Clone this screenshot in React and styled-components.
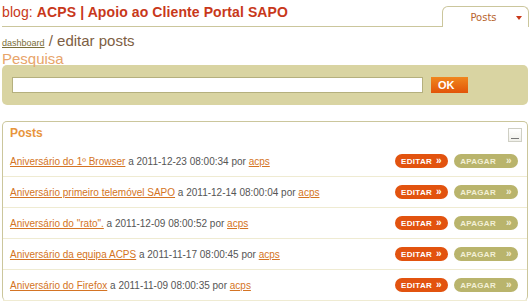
import React from 'react';
import styled, { createGlobalStyle } from 'styled-components';

const GlobalStyle = createGlobalStyle`
  body {
    margin: 0;
    background: #fff;
    font-family: "Liberation Sans", Arial, sans-serif;
  }
`;

const posts = [
  { title: 'Aniversário do 1º Browser', date: '2011-12-23 08:00:34' },
  { title: 'Aniversário primeiro telemóvel SAPO', date: '2011-12-14 08:00:04' },
  { title: 'Aniversário do "rato".', date: '2011-12-09 08:00:52' },
  { title: 'Aniversário da equipa ACPS', date: '2011-11-17 08:00:45' },
  { title: 'Aniversário do Firefox', date: '2011-11-09 08:00:35' },
];

const App = () => {
  return (
    <>
      <GlobalStyle />
      <Page>
        <Header>
          <Title>blog: <b>ACPS | Apoio ao Cliente Portal SAPO</b></Title>
          <Tab>
            <span>Posts</span>
            <TabArrow />
          </Tab>
        </Header>

        <Crumbs>
          <CrumbLink href="#">dashboard</CrumbLink> / editar posts
        </Crumbs>
        <SearchLabel>Pesquisa</SearchLabel>
        <SearchBox>
          <SearchInput type="text" />
          <OkButton>OK</OkButton>
        </SearchBox>

        <Panel>
          <PanelHead>
            <PanelTitle>Posts</PanelTitle>
            <Collapse />
          </PanelHead>
          {posts.map((p) => (
            <Row key={p.date}>
              <RowText>
                <PostLink href="#">{p.title}</PostLink> a {p.date} por <PostLink href="#">acps</PostLink>
              </RowText>
              <Actions>
                <PillButton $kind="edit">EDITAR <Chev>»</Chev></PillButton>
                <PillButton $kind="delete">APAGAR <Chev>»</Chev></PillButton>
              </Actions>
            </Row>
          ))}
        </Panel>
      </Page>
    </>
  );
};

const Page = styled.div`
  padding: 0 2px;
  width: 526px;
`;

const Header = styled.div`
  display: flex;
  justify-content: space-between;
  align-items: flex-end;
  height: 26px;
  border-bottom: 1px solid #cbc69c;
`;

const Title = styled.h1`
  margin: 0 0 6px 0;
  font-size: 14px;
  letter-spacing: 0.1px;
  font-weight: normal;
  color: #c8381a;
  white-space: nowrap;
  b {
    font-weight: bold;
  }
`;

const Tab = styled.div`
  position: relative;
  display: flex;
  align-items: center;
  justify-content: center;
  width: 85px;
  height: 20px;
  margin-bottom: -1px;
  margin-right: -1px;
  background: #fff;
  border: 1px solid #cbc69c;
  border-bottom: none;
  border-radius: 6px 6px 0 0;
  font-family: "DejaVu Sans", sans-serif;
  font-size: 10px;
  color: #b8642e;
  span {
    margin-right: 4px;
  }
`;

const TabArrow = styled.i`
  position: absolute;
  right: 6px;
  top: 9px;
  width: 0;
  height: 0;
  border-left: 3px solid transparent;
  border-right: 3px solid transparent;
  border-top: 4px solid #c8381a;
`;

const Crumbs = styled.div`
  margin-top: 6px;
  font-size: 15px;
  color: #7d5e43;
  line-height: 15px;
`;

const CrumbLink = styled.a`
  font-size: 9px;
  color: #7a6e38;
  text-decoration: underline;
`;

const SearchLabel = styled.div`
  font-size: 15px;
  color: #e8a46a;
  line-height: 13px;
  height: 13px;
  margin-top: 1px;
`;

const SearchBox = styled.div`
  display: flex;
  align-items: center;
  height: 40px;
  padding: 0 10px;
  background: #d9d4a2;
  border-radius: 5px;
`;

const SearchInput = styled.input`
  box-sizing: border-box;
  width: 411px;
  height: 16px;
  margin: 0;
  padding: 0;
  border: 1px solid #b5b07e;
  background: #fff;
`;

const OkButton = styled.button`
  width: 37px;
  height: 16px;
  margin-left: 8px;
  padding: 0 0 0 7px;
  border: none;
  text-align: left;
  background: linear-gradient(#f0861e, #e25408);
  color: #fff;
  font-family: "Liberation Sans", Arial, sans-serif;
  font-weight: bold;
  font-size: 11px;
  line-height: 16px;
`;

const Panel = styled.div`
  margin-top: 16px;
  border: 1px solid #cbc69c;
  border-radius: 5px;
  border-bottom: none;
`;

const PanelHead = styled.div`
  display: flex;
  justify-content: space-between;
  align-items: center;
  height: 24px;
  padding: 0 5px 0 7px;
`;

const PanelTitle = styled.span`
  font-weight: bold;
  font-size: 12px;
  color: #e8953c;
  margin-top: -2px;
`;

const Collapse = styled.span`
  position: relative;
  width: 12px;
  height: 12px;
  margin-top: 2px;
  border: 1px solid #cfcfc4;
  background: linear-gradient(#ffffff, #f0f0ea);
  &::after {
    content: '';
    position: absolute;
    left: 2px;
    right: 2px;
    bottom: 2px;
    height: 1px;
    background: #777;
  }
`;

const Row = styled.div`
  display: flex;
  justify-content: space-between;
  align-items: center;
  height: 30px;
  padding: 0 9px 0 7px;
  border-bottom: 1px solid #efebd2;
`;

const RowText = styled.div`
  font-size: 10px;
  color: #555;
  white-space: nowrap;
`;

const PostLink = styled.a`
  color: #d47424;
  text-decoration: underline;
`;

const Actions = styled.div`
  display: flex;
  gap: 6px;
`;

const PillButton = styled.span`
  display: inline-flex;
  align-items: center;
  justify-content: center;
  box-sizing: border-box;
  height: 14px;
  width: ${(p) => (p.$kind === 'edit' ? '53px' : '64px')};
  border-radius: 7px;
  background: ${(p) => (p.$kind === 'edit' ? '#e2530f' : '#b9b46c')};
  color: ${(p) => (p.$kind === 'edit' ? '#fff' : '#f3f0d6')};
  font-weight: bold;
  font-size: 8px;
  letter-spacing: 0.3px;
  gap: ${(p) => (p.$kind === 'edit' ? '4px' : '10px')};
`;

const Chev = styled.span`
  font-size: 10px;
  line-height: 10px;
  margin-top: -1px;
`;

export default App;
